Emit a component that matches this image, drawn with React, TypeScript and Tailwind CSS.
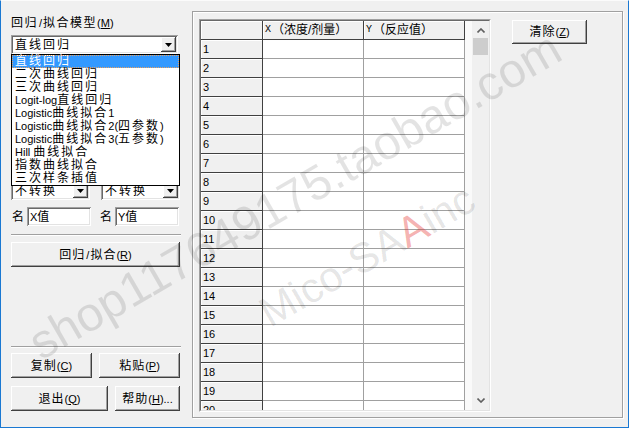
import React from "react";

const CJK = /([\u3000-\u303f\u4e00-\u9fff\uff00-\uffef]+)/;

function Mix({ t, c, l }: { t: string; c: string; l: string }) {
  return (
    <>
      {t.split(CJK).map((p, i) =>
        p === "" ? null : (
          <span key={i} className={CJK.test(p) ? c : l}>
            {p}
          </span>
        )
      )}
    </>
  );
}

const FONT = "font-['Liberation_Sans','Noto_Sans_CJK_SC',sans-serif]";
const BTN =
  "flex items-center justify-center bg-[#f0f0f0] text-black shadow-[inset_-1px_-1px_#404040,inset_1px_1px_#ffffff,inset_-2px_-2px_#a0a0a0,inset_2px_2px_#f0f0f0]";
const SUNKEN =
  "bg-white shadow-[inset_1px_1px_#a0a0a0,inset_-1px_-1px_#ffffff,inset_2px_2px_#696969,inset_-2px_-2px_#e3e3e3]";

function DownTri() {
  return (
    <svg width="7" height="4" viewBox="0 0 7 4">
      <polygon points="0,0 7,0 3.5,4" fill="#000" />
    </svg>
  );
}

function ComboBtn() {
  return (
    <div className={"w-[15px] h-[15px] " + BTN}>
      <DownTri />
    </div>
  );
}

function Combo({ text, w }: { text: string; w: string }) {
  return (
    <div className={"flex items-center justify-between pl-[4px] pr-[2px] h-[19px] " + w + " " + SUNKEN}>
      <span className="leading-[14px] text-[12px]">
        <Mix t={text} c="tracking-[2px]" l="text-[11px]" />
      </span>
      <ComboBtn />
    </div>
  );
}

function Acc({ t, k, extra = "" }: { t: string; k: string; extra?: string }) {
  return (
    <span className="text-[12px] leading-[14px] whitespace-nowrap">
      <span className="tracking-[1px]">{t}</span>
      <span className="text-[11px]">
        (<u>{k}</u>){extra}
      </span>
    </span>
  );
}

const items = [
  "直线回归",
  "二次曲线回归",
  "三次曲线回归",
  "Logit-log直线回归",
  "Logistic曲线拟合1",
  "Logistic曲线拟合2(四参数)",
  "Logistic曲线拟合3(五参数)",
  "Hill 曲线拟合",
  "指数曲线拟合",
  "三次样条插值",
];

function ChevUp() {
  return (
    <svg width="8" height="5" viewBox="0 0 8 5">
      <polyline points="0.5,4.5 4,1 7.5,4.5" fill="none" stroke="#606060" strokeWidth="1.6" />
    </svg>
  );
}
function ChevDown() {
  return (
    <svg width="8" height="5" viewBox="0 0 8 5">
      <polyline points="0.5,0.5 4,4 7.5,0.5" fill="none" stroke="#606060" strokeWidth="1.6" />
    </svg>
  );
}

export default function App() {
  const rows = Array.from({ length: 20 }, (_, i) => i + 1);
  return (
    <div
      className={
        "relative w-[629px] h-[428px] overflow-hidden bg-[#f0f0f0] border-l border-r border-b border-[#1a78d2] border-t border-t-[#fbfbfb] text-black " +
        FONT
      }
    >
      <div className="flex items-start">
        {/* Left panel */}
        <div className="ml-[10px] w-[170px] flex flex-col">
          <div className="mt-[15px] h-[14px] flex items-center">
            <span className="text-[12px] leading-[14px] whitespace-nowrap">
              <Mix t="回归/拟合模型" c="tracking-[1.5px]" l="text-[11px] px-[1px]" />
              <span className="text-[11px]">
                (<u>M</u>)
              </span>
            </span>
          </div>
          <div className="mt-[5px]">
            <Combo text="直线回归" w="w-[167px]" />
          </div>
          <div className="h-[127px]" />
          <div className="flex gap-[11px]">
            <Combo text="不转换" w="w-[79px]" />
            <Combo text="不转换" w="w-[79px]" />
          </div>
          <div className="mt-[7px] flex items-center">
            <span className="w-[16px] pl-[1px] text-[12px] leading-[14px]">名</span>
            <div className={"w-[64px] h-[19px] flex items-center pl-[3px] text-[12px] leading-[14px] " + SUNKEN}>
              <span>
                <span className="text-[11px]">X</span>值
              </span>
            </div>
            <span className="ml-[9px] w-[15px] text-[12px] leading-[14px]">名</span>
            <div className={"w-[64px] h-[19px] flex items-center pl-[3px] text-[12px] leading-[14px] " + SUNKEN}>
              <span>
                <span className="text-[11px]">Y</span>值
              </span>
            </div>
          </div>
          <div className="mt-[8px] w-[170px] h-[2px] border-t border-t-[#a0a0a0] border-b border-b-white" />
          <div className={"mt-[6px] w-[169px] h-[25px] " + BTN}>
            <span className="text-[12px] leading-[14px] whitespace-nowrap">
              <Mix t="回归/拟合" c="tracking-[1px]" l="text-[11px] px-[1px]" />
              <span className="text-[11px]">
                (<u>R</u>)
              </span>
            </span>
          </div>
          <div className="mt-[79px] w-[170px] h-[2px] border-t border-t-[#a0a0a0] border-b border-b-white" />
          <div className="mt-[5px] flex gap-[7px]">
            <div className={"w-[81px] h-[25px] " + BTN}>
              <Acc t="复制" k="C" />
            </div>
            <div className={"w-[81px] h-[25px] " + BTN}>
              <Acc t="粘贴" k="P" />
            </div>
          </div>
          <div className="mt-[8px] flex gap-[7px]">
            <div className={"w-[97px] h-[25px] " + BTN}>
              <Acc t="退出" k="Q" />
            </div>
            <div className={"w-[65px] h-[25px] " + BTN}>
              <Acc t="帮助" k="H" extra="..." />
            </div>
          </div>
        </div>

        {/* Right frame */}
        <div className="ml-[11px] mt-[10px] w-[431px] h-[407px] border border-[#a0a0a0] shadow-[inset_1px_1px_#ffffff,1px_1px_#ffffff]">
          <div className="flex items-start pl-[6px] pt-[7px]">
            <div className="w-[292px] h-[393px] border-t border-l border-[#a0a0a0] border-r border-b border-r-white border-b-white">
              <div className="w-[290px] h-[391px] border-t border-l border-[#696969] border-r border-b border-r-[#e3e3e3] border-b-[#e3e3e3] flex overflow-hidden">
                <div className="w-[264px] flex flex-col bg-white">
                  <div className="flex h-[19px] shrink-0">
                    <div className="w-[62px] h-[19px] bg-[#f0f0f0] border-r border-b border-[#404040] shadow-[inset_1px_1px_#ffffff]" />
                    <div className="w-[101px] h-[19px] bg-[#f0f0f0] border-r border-b border-[#404040] shadow-[inset_1px_1px_#ffffff] pl-[2px] flex items-center text-[12px] leading-[14px] whitespace-nowrap">
                      <span className="font-['Liberation_Mono',monospace] text-[10px] mr-[1px]">X</span>
                      <span>（浓度/剂量）</span>
                    </div>
                    <div className="w-[101px] h-[19px] bg-[#f0f0f0] border-r border-b border-[#404040] shadow-[inset_1px_1px_#ffffff] pl-[2px] flex items-center text-[12px] leading-[14px] whitespace-nowrap">
                      <span className="font-['Liberation_Mono',monospace] text-[10px] mr-[1px]">Y</span>
                      <span>（反应值）</span>
                    </div>
                  </div>
                  {rows.map((r) => (
                    <div key={r} className="flex h-[19px] shrink-0">
                      <div className="w-[62px] h-[19px] bg-[#f0f0f0] border-r border-b border-[#404040] shadow-[inset_1px_1px_#ffffff] pl-[2px] pt-[3px] text-[11px] leading-[13px]">
                        {r}
                      </div>
                      <div className="w-[101px] h-[19px] border-r border-b border-[#a0a0a0]" />
                      <div className="w-[101px] h-[19px] border-r border-b border-[#a0a0a0]" />
                    </div>
                  ))}
                </div>
                <div className="w-[7px] bg-[#fafafa]" />
                <div className="w-[17px] bg-[#f0f0f0] flex flex-col items-center">
                  <div className="h-[17px] w-full flex items-center justify-center pt-[1px]">
                    <ChevUp />
                  </div>
                  <div className="w-[15px] h-[17px] bg-[#cdcdcd]" />
                  <div className="flex-1" />
                  <div className="h-[17px] w-full flex items-center justify-center mb-[1px]">
                    <ChevDown />
                  </div>
                </div>
              </div>
            </div>
            <div className={"ml-[21px] mt-[1px] w-[75px] h-[24px] " + BTN}>
              <Acc t="清除" k="Z" />
            </div>
          </div>
        </div>
      </div>

      {/* Drop-down list (open) */}
      <div className="absolute left-[10px] top-[53px] w-[169px] h-[132px] bg-white border border-black flex flex-col">
        {items.map((it, i) => (
          <div
            key={it}
            className={
              "h-[13px] shrink-0 flex items-center pl-[3px] whitespace-nowrap text-[12px] leading-[13px] " +
              (i === 0 ? "bg-[#3399ff] text-white outline outline-1 outline-dotted outline-[#e8a060] -outline-offset-1" : "")
            }
          >
            <span className="whitespace-pre">
              <Mix t={it} c="tracking-[2px]" l="text-[11px]" />
            </span>
          </div>
        ))}
      </div>

      {/* Watermarks */}
      <div className="pointer-events-none absolute left-[32px] top-[322px] origin-left -rotate-[30deg] whitespace-nowrap font-['Liberation_Sans',sans-serif] text-[48px] leading-[48px] text-black/[0.11]">
        shop117649175.taobao.com
      </div>
      <div className="pointer-events-none absolute left-[262px] top-[294px] origin-left -rotate-[30deg] whitespace-nowrap font-['Liberation_Sans',sans-serif] text-[42px] leading-[42px] text-black/[0.11]">
        Mico-SA<span className="text-[#e53935]/40">A</span>inc
      </div>
    </div>
  );
}
